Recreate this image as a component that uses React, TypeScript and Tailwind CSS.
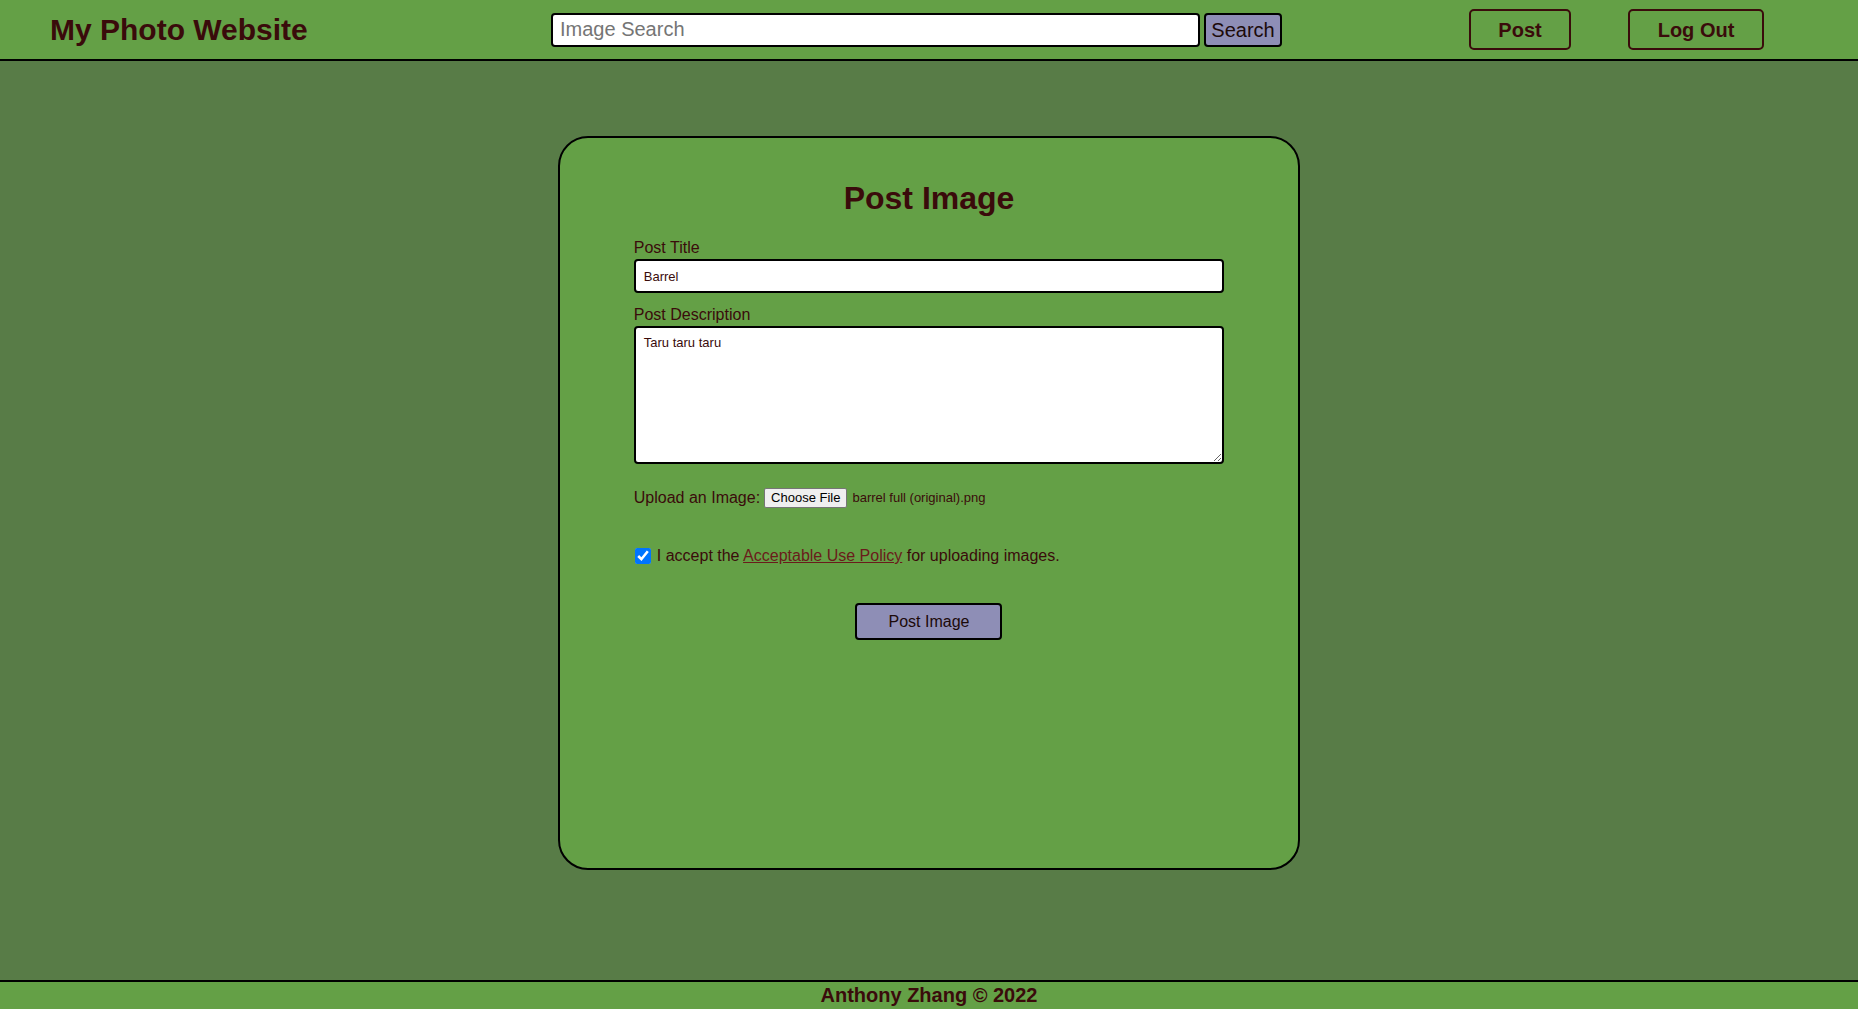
import React from "react";

// Post image page: header with search, centered form card, footer
export default function App() {
  return (
    <div className="min-h-screen flex flex-col bg-[#587c47] text-[#3a0b0b] font-['Liberation_Sans',Arial,sans-serif]">
      <header className="h-[61px] shrink-0 bg-[#64a046] border-b-2 border-black flex items-center">
        <div className="w-[551px] pl-[50px]">
          <h1 className="text-[30px] leading-[34px] font-bold">My Photo Website</h1>
        </div>
        <form className="flex items-center gap-[4px]" onSubmit={(e) => e.preventDefault()}>
          <input
            type="text"
            placeholder="Image Search"
            className="w-[649px] h-[34px] bg-white border-2 border-black rounded-[4px] px-[7px] text-[20px] placeholder:text-[#757575] outline-none"
          />
          <button className="w-[78px] h-[34px] bg-[#8e8eb6] border-2 border-black rounded-[4px] text-[20px] text-[#1c0a0a]">
            Search
          </button>
        </form>
        <button className="ml-[187px] w-[102px] h-[41px] border-2 border-[#3a0b0b] rounded-[5px] text-[20px] font-bold">
          Post
        </button>
        <button className="ml-[57px] w-[136px] h-[41px] border-2 border-[#3a0b0b] rounded-[5px] text-[20px] font-bold">
          Log Out
        </button>
      </header>

      <main className="flex-1 flex justify-center pt-[75px]">
        <div className="w-[742px] h-[734px] bg-[#64a046] border-2 border-black rounded-[30px] pt-[42px]">
          <h2 className="text-[32px] leading-[37px] font-bold text-center">Post Image</h2>
          <form className="w-[80%] mx-auto mt-[22px] flex flex-col" onSubmit={(e) => e.preventDefault()}>
            <label className="text-[16px] leading-[18px]">Post Title</label>
            <input
              type="text"
              defaultValue="Barrel"
              className="mt-[2px] h-[34px] bg-white border-2 border-black rounded-[4px] px-[8px] text-[13px] outline-none"
            />
            <label className="mt-[13px] text-[16px] leading-[18px]">Post Description</label>
            <textarea
              defaultValue="Taru taru taru"
              className="mt-[2px] h-[138px] bg-white border-2 border-black rounded-[4px] px-[8px] py-[7px] text-[13px] leading-[15px] outline-none"
            />
            <div className="mt-[24px] flex items-center h-[20px]">
              <span className="text-[16px] leading-[18px]">Upload an Image:</span>
              <span className="ml-[4px] h-[20px] px-[6px] flex items-center bg-[#efefef] border border-[#767676] rounded-[2px] text-[13px] text-black">
                Choose File
              </span>
              <span className="ml-[5px] text-[13px]">barrel full (original).png</span>
            </div>
            <div className="mt-[39px] flex items-center h-[18px]">
              <input type="checkbox" defaultChecked className="ml-[1px] w-[16px] h-[16px] accent-[#0075ff]" />
              <span className="ml-[6px] text-[16px] leading-[18px]">
                I accept the{" "}
                <a href="#" className="underline text-[#6a1b1b]">
                  Acceptable Use Policy
                </a>{" "}
                for uploading images.
              </span>
            </div>
            <div className="mt-[38px] flex justify-center">
              <button className="w-[147px] h-[37px] bg-[#8e8eb6] border-2 border-black rounded-[4px] text-[16px] text-[#1c0a0a]">
                Post Image
              </button>
            </div>
          </form>
        </div>
      </main>

      <footer className="h-[29px] shrink-0 bg-[#64a046] border-t-2 border-black text-center text-[20px] leading-[26px] font-bold">
        Anthony Zhang © 2022
      </footer>
    </div>
  );
}
